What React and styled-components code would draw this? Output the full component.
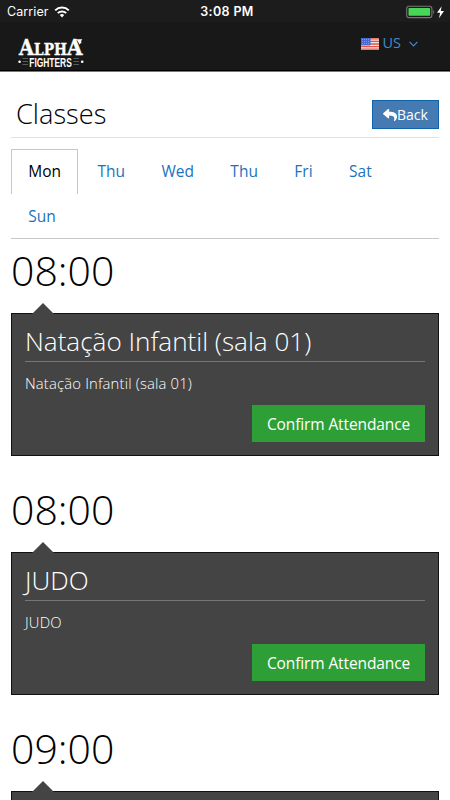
import React, {useState} from 'react'
import styled, {createGlobalStyle} from 'styled-components'
import {FaReply} from 'react-icons/fa'

const days = ['Mon', 'Thu', 'Wed', 'Thu', 'Fri', 'Sat', 'Sun']

const classes = [
    {time: '08:00', name: 'Natação Infantil (sala 01)'},
    {time: '08:00', name: 'JUDO'},
    {time: '09:00', name: 'JUDO'},
]

function StatusBar() {
  return (
    <Status>
        <Carrier>
            <span>Carrier</span>
            <svg width="16" height="12" viewBox="0 0 16 12" fill="none" stroke="#fff" strokeWidth="2">
                <path d="M1.2 4.4a9.7 9.7 0 0 1 13.6 0" />
                <path d="M3.8 7.1a6 6 0 0 1 8.4 0" />
                <path d="M5.8 9.1a3.1 3.1 0 0 1 4.4 0L8 11.4z" fill="#fff" stroke="none" />
            </svg>
        </Carrier>
        <Clock>3:08 PM</Clock>
        <Power>
            <svg width="40" height="14" viewBox="0 0 40 14">
                <rect x="0.7" y="1.2" width="25.2" height="11.4" rx="2.4" fill="none" stroke="#77777a" strokeWidth="1.1" />
                <rect x="2.5" y="3" width="21.6" height="7.8" rx="0.8" fill="#45d755" />
                <path d="M27.2 5v4c1.3-.6 1.3-3.4 0-4z" fill="#77777a" />
                <path d="M35.6 1.2l-4.6 6.6h3.1l-1.1 5.4 5-7.2h-3.2z" fill="#fff" />
            </svg>
        </Power>
    </Status>
  )
}

function Logo() {
  return (
    <svg width="68" height="33" viewBox="0 0 68 33" fill="#fff">
        <g fontFamily="'DejaVu Serif', serif" fontWeight="bold" stroke="#fff" strokeWidth="0.4">
            <text x="1" y="18.8" fontSize="21.5" textLength="15" lengthAdjust="spacingAndGlyphs">A</text>
            <text x="16" y="18.8" fontSize="17.4" textLength="33" lengthAdjust="spacingAndGlyphs">LPH</text>
            <text x="49" y="18.8" fontSize="21.5" textLength="15.5" lengthAdjust="spacingAndGlyphs">A</text>
        </g>
        <path d="M56 3.2h8.4l-1.6 2.4 1 .3-2.2 2.6-2.2-4z" />
        <text x="11.3" y="30.5" fontFamily="'Liberation Sans', sans-serif" fontWeight="bold" fontSize="13.5" textLength="42.5" lengthAdjust="spacingAndGlyphs">FIGHTERS</text>
        <path d="M4.5 22.5h5.5M4.5 25.5h5.5M4.5 28.5h5.5M55.5 22.5h5.5M55.5 25.5h5.5M55.5 28.5h5.5" stroke="#5a5a5a" />
        <circle cx="1.6" cy="25.8" r="1.3" />
        <circle cx="64.2" cy="25.8" r="1.3" />
    </svg>
  )
}

function Flag() {
  return (
    <svg width="18" height="12" viewBox="0 0 18 12">
        <rect width="18" height="12" fill="#f7e4e0" />
        <path d="M0 .8h18M0 3.4h18M0 6h18M0 8.6h18M0 11.2h18" stroke="#df5548" strokeWidth="1.3" />
        <rect width="9.5" height="7.4" fill="#4668cf" />
        <path d="M1 1.5h8M1 3.5h8M1 5.5h8" stroke="#8ea3e6" strokeWidth="0.8" strokeDasharray="1 1" />
    </svg>
  )
}

function App() {
    const [active, setActive] = useState(0)

  return (
    <Page>
        <GlobalStyle />
        <StatusBar />
        <Header>
            <Logo />
            <Language>
                <Flag />
                <span>US</span>
                <svg width="9" height="6" viewBox="0 0 9 6" fill="none" stroke="#428bca" strokeWidth="1.2">
                    <path d="M.6.8l3.9 4 3.9-4" />
                </svg>
            </Language>
        </Header>
        <Content>
            <TitleRow>
                <Title>Classes</Title>
                <BackButton><FaReply />Back</BackButton>
            </TitleRow>
            <Tabs>
                {days.map((day, i) => (
                    <Tab key={i} $active={active === i} onClick={() => setActive(i)}>{day}</Tab>
                ))}
            </Tabs>
            {classes.map((item, i) => (
                <ClassItem key={i}>
                    <Time>{item.time}</Time>
                    <Card>
                        <CardTitle>{item.name}</CardTitle>
                        <CardText>{item.name}</CardText>
                        <ConfirmButton>Confirm Attendance</ConfirmButton>
                    </Card>
                </ClassItem>
            ))}
        </Content>
    </Page>
  )
}

export default App

const GlobalStyle = createGlobalStyle`
    * {
        box-sizing: border-box;
    }

    body {
        margin: 0;
        background: white;
        font-family: 'Open Sans', sans-serif;
        overflow: hidden;
    }

    button {
        font-family: inherit;
        cursor: pointer;
    }
`

const Page = styled.div `
    height: 800px;
    overflow: hidden;
    display: flex;
    flex-direction: column;
`

const Status = styled.div `
    flex: none;
    height: 22px;
    display: grid;
    grid-template-columns: 1fr auto 1fr;
    align-items: center;
    padding: 0 4px 0 7px;
    background: #1c1c1c;
    color: white;
    font-family: Inter, sans-serif;
    font-size: 12.5px;
    line-height: 22px;
`

const Carrier = styled.div `
    display: flex;
    align-items: center;
    gap: 5px;
    letter-spacing: 0.1px;
`

const Clock = styled.div `
    font-weight: 600;
    font-size: 12.5px;
    letter-spacing: 0.35px;
    padding: 1px 0 0 1px;
`

const Power = styled.div `
    display: flex;
    justify-content: flex-end;
`

const Header = styled.header `
    flex: none;
    height: 50px;
    display: flex;
    align-items: flex-start;
    justify-content: space-between;
    padding: 14px 32px 0 18px;
    background: #181818;
    border-bottom: 1px solid #777;
    box-shadow: inset 0 -1px 0 #000;
`

const Language = styled.div `
    display: flex;
    align-items: center;
    gap: 3px;
    height: 16px;
    color: #428bca;
    font-size: 14.5px;
    font-weight: 380;
    line-height: 14px;

    span {
        margin-right: 5px;
        padding-bottom: 2px;
    }
`

const Content = styled.main `
    flex: none;
    display: flex;
    flex-direction: column;
    padding: 0 11px;
`

const TitleRow = styled.div `
    height: 66px;
    display: flex;
    justify-content: space-between;
    align-items: flex-start;
    padding: 28px 0 0 5px;
    border-bottom: 1px solid #e2e2e2;
`

const Title = styled.h1 `
    margin: 0;
    font-size: 27.2px;
    font-weight: 300;
    line-height: 27px;
    color: black;
`

const BackButton = styled.button `
    width: 67px;
    height: 29px;
    display: flex;
    align-items: center;
    justify-content: center;
    padding: 0;
    border: 1px solid #0f65ab;
    background: #467ab2;
    color: white;
    font-size: 14px;

    svg {
        width: 14px;
        height: 14px;
    }
`

const Tabs = styled.div `
    display: flex;
    flex-wrap: wrap;
    gap: 0 2px;
    height: 90px;
    margin-top: 11px;
    padding-right: 40px;
    border-bottom: 1px solid #c8c8c8;
`

const Tab = styled.button `
    height: 45px;
    padding: 0 16.2px 1.5px;
    border: 1px solid ${(props) => (props.$active ? '#c8c8c8' : 'transparent')};
    border-bottom: none;
    background: ${(props) => (props.$active ? 'white' : 'transparent')};
    color: ${(props) => (props.$active ? 'black' : '#1b72be')};
    font-size: 15.5px;
    font-weight: 370;
    letter-spacing: 0.02px;
`

const ClassItem = styled.section `
    height: 239px;
    display: flex;
    flex-direction: column;
`

const Time = styled.h2 `
    margin: 0;
    height: 74px;
    font-size: 41px;
    font-weight: 300;
    line-height: 62px;
    color: black;
`

const Card = styled.div `
    position: relative;
    height: 143px;
    display: flex;
    flex-direction: column;
    padding: 12px 13px 13px;
    border: 1px solid #111;
    background: #444;
    color: white;

    &::before {
        content: '';
        position: absolute;
        top: -11px;
        left: 20px;
        border: solid transparent;
        border-width: 0 11px 11px;
        border-bottom-color: #444;
    }
`

const CardTitle = styled.h3 `
    margin: 0;
    height: 36px;
    border-bottom: 1px solid #777;
    font-size: 26.1px;
    font-weight: 300;
    line-height: 30px;
    white-space: nowrap;
`

const CardText = styled.p `
    margin: 0;
    height: 43px;
    font-size: 14.8px;
    font-weight: 300;
    letter-spacing: 0.18px;
    line-height: 42px;
`

const ConfirmButton = styled.button `
    align-self: flex-end;
    width: 173px;
    height: 37px;
    padding: 0;
    border: none;
    background: #2e9f36;
    color: white;
    font-size: 15.5px;
    font-weight: 380;
    letter-spacing: -0.12px;
`
